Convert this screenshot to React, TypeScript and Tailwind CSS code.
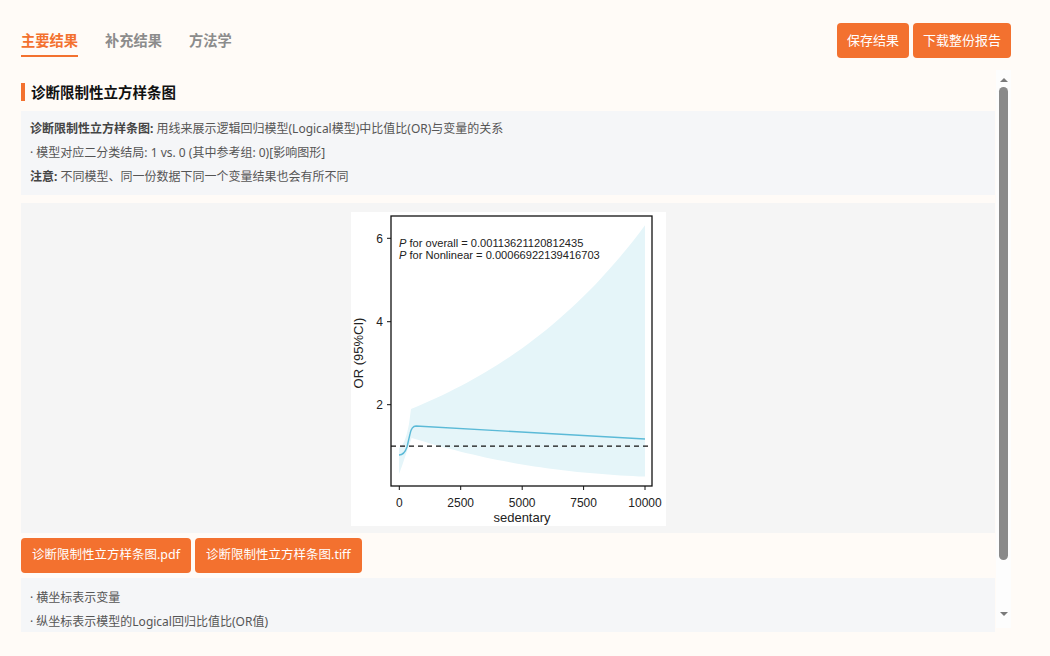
import React from 'react';

const orange = 'bg-[#f3712f]';

// svg coordinates for the spline plot
const px = (v: number) => 48.3 + v * 0.02457;
const py = (or: number) => 234.2 - (or - 1) * 41.67;

const buildBand = () => {
  const upper: string[] = [];
  const lower: string[] = [];
  for (let v = 500; v <= 10000; v += 250) {
    const up = 1.9 * Math.exp(1.262e-4 * (v - 500));
    const t = (v - 500) / 9500;
    const lo = 0.27 + 0.93 * Math.pow(1 - t, 2.2) * 0.75 + 0.93 * 0.25 * (1 - t);
    upper.push(`${px(v).toFixed(1)},${py(up).toFixed(1)}`);
    lower.unshift(`${px(v).toFixed(1)},${py(lo).toFixed(1)}`);
  }
  return (
    'M48,236 C52,234 55,228 58,212 L60,197 L' +
    upper.join(' L') +
    ' L' +
    lower.join(' L') +
    ' L60,228 C56,238 52,252 48,262 Z'
  );
};

const SplinePlot: React.FC = () => {
  const xTicks = [
    { v: '0', x: 48.3 },
    { v: '2500', x: 109.7 },
    { v: '5000', x: 171.2 },
    { v: '7500', x: 232.6 },
    { v: '10000', x: 294 },
  ];
  const yTicks = [
    { v: '6', y: 26.3 },
    { v: '4', y: 109.7 },
    { v: '2', y: 192.7 },
  ];
  const font = "'Liberation Sans', Arial, sans-serif";

  return (
    <svg width="315" height="314" viewBox="0 0 315 314" className="block bg-white">
      {/* confidence band */}
      <path d={buildBand()} fill="#e5f5f9" />
      {/* fitted line */}
      <path
        d="M48,243 C51,243 54,241 56,235 L59,222 C60,217 62,214 65,214 L294,227"
        fill="none"
        stroke="#5bbad7"
        strokeWidth="1.4"
      />
      {/* reference line */}
      <line x1="40" y1="234.2" x2="301" y2="234.2" stroke="#111" strokeWidth="1.2" strokeDasharray="5 4" />
      {/* frame */}
      <rect x="40" y="4" width="261" height="270" fill="none" stroke="#111" strokeWidth="1.3" />

      {yTicks.map(t => (
        <g key={t.v}>
          <line x1="36" y1={t.y} x2="40" y2={t.y} stroke="#111" strokeWidth="1" />
          <text x="32" y={t.y + 4.2} textAnchor="end" fontSize="12" fill="#222" fontFamily={font}>
            {t.v}
          </text>
        </g>
      ))}
      {xTicks.map(t => (
        <g key={t.v}>
          <line x1={t.x} y1="274" x2={t.x} y2="278" stroke="#111" strokeWidth="1" />
          <text x={t.x} y="295" textAnchor="middle" fontSize="12" fill="#222" fontFamily={font}>
            {t.v}
          </text>
        </g>
      ))}

      <text x="171" y="309.5" textAnchor="middle" fontSize="13" fill="#222" fontFamily={font}>
        sedentary
      </text>
      <text
        x="0"
        y="0"
        transform="translate(12 141) rotate(-90)"
        textAnchor="middle"
        fontSize="13"
        fill="#222"
        fontFamily={font}
      >
        OR (95%CI)
      </text>

      <text x="48" y="34.5" fontSize="11.1" fill="#222" fontFamily={font}>
        <tspan fontStyle="italic">P</tspan> for overall = 0.00113621120812435
      </text>
      <text x="48" y="47" fontSize="11.1" fill="#222" fontFamily={font}>
        <tspan fontStyle="italic">P</tspan> for Nonlinear = 0.00066922139416703
      </text>
    </svg>
  );
};

const App: React.FC = () => {
  const tabs = ['主要结果', '补充结果', '方法学'];

  return (
    <div className="w-[1050px] h-[656px] overflow-hidden bg-[#fffbf7] font-['Noto_Sans','Noto_Sans_CJK_SC',sans-serif]">
      {/* header */}
      <div className="h-[70px] flex items-start justify-between pl-[21px] pr-[39px] pt-[23px]">
        <div className="flex gap-[27px] pt-[8px]">
          {tabs.map((t, i) => (
            <div
              key={t}
              className={
                i === 0
                  ? 'text-[14.25px] leading-[20px] font-bold text-[#f3712f] pb-[4px] border-b-2 border-[#f3712f]'
                  : 'text-[14.25px] leading-[20px] font-bold text-[#8c8c8c] pb-[4px] border-b-2 border-transparent'
              }
            >
              {t}
            </div>
          ))}
        </div>
        <div className="flex gap-[4px]">
          <button className={`${orange} h-[35px] px-[10px] rounded text-[13px] text-white`}>保存结果</button>
          <button className={`${orange} h-[35px] px-[10px] rounded text-[13px] text-white`}>下载整份报告</button>
        </div>
      </div>

      {/* scroll area */}
      <div className="flex h-[562px] pl-[21px]">
        <div className="w-[974px] overflow-hidden pt-[13px]">
          <div className="flex items-center h-[18px] border-l-4 border-[#f3712f] pl-[6px]">
            <span className="text-[14.5px] font-bold text-[#111] leading-[18px]">诊断限制性立方样条图</span>
          </div>

          <div className="mt-[10px] bg-[#f5f6f8] py-[6px] pl-[9px] text-[12px] leading-[24px] text-[#555]">
            <div>
              <span className="font-bold text-[#444]">诊断限制性立方样条图:</span> 用线来展示逻辑回归模型(Logical模型)中比值比(OR)与变量的关系
            </div>
            <div>· 模型对应二分类结局: 1 vs. 0 (其中参考组: 0)[影响图形]</div>
            <div>
              <span className="font-bold text-[#444]">注意:</span> 不同模型、同一份数据下同一个变量结果也会有所不同
            </div>
          </div>

          <div className="mt-[8px] bg-[#f5f5f5] pt-[9px] pb-[7px] flex justify-center">
            <SplinePlot />
          </div>

          <div className="mt-[5px] flex gap-[4px]">
            <button className={`${orange} h-[35px] px-[11px] rounded text-[12.5px] text-white`}>诊断限制性立方样条图.pdf</button>
            <button className={`${orange} h-[35px] px-[11px] rounded text-[12.5px] text-white`}>诊断限制性立方样条图.tiff</button>
          </div>

          <div className="mt-[5px] bg-[#f5f6f8] pt-[8px] pl-[9px] pb-[8px] text-[12px] leading-[24px] text-[#555]">
            <div>· 横坐标表示变量</div>
            <div>· 纵坐标表示模型的Logical回归比值比(OR值)</div>
          </div>
        </div>

        {/* scrollbar */}
        <div className="w-[15px] ml-[1px] h-[558px] bg-[#fdfdfd] flex flex-col items-center">
          <div className="h-[12px] flex items-end justify-center">
            <div className="w-0 h-0 border-l-[4px] border-r-[4px] border-b-[4px] border-l-transparent border-r-transparent border-b-[#7a7a7a]" />
          </div>
          <div className="mt-[5px] w-[9px] h-[473px] rounded-full bg-[#8a8a8a]" />
          <div className="flex-1" />
          <div className="h-[16px] flex items-start justify-center">
            <div className="w-0 h-0 border-l-[4px] border-r-[4px] border-t-[4px] border-l-transparent border-r-transparent border-t-[#7a7a7a]" />
          </div>
        </div>
      </div>
    </div>
  );
};

export default App;
